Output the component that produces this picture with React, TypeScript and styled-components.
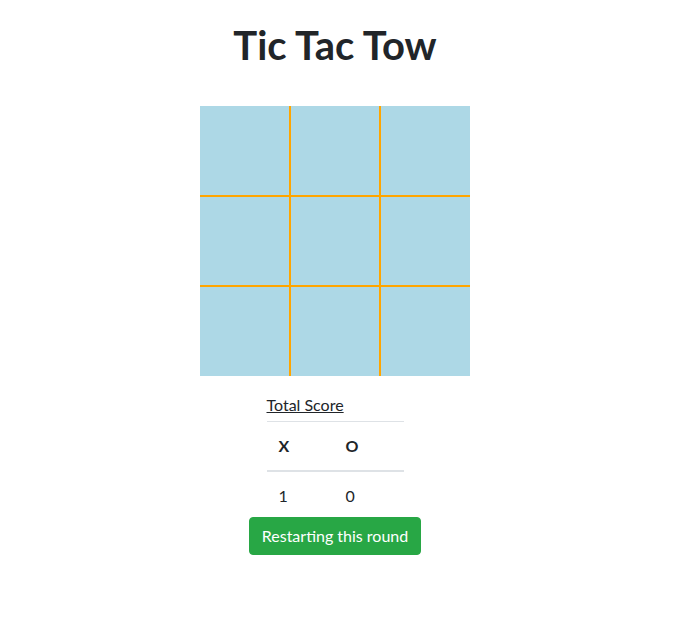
import React from "react";
import styled, { createGlobalStyle } from "styled-components";

const GlobalStyle = createGlobalStyle`
    body {
        margin: 0;
        font-family: Lato, "Open Sans", sans-serif;
        color: #212529;
        background: #fff;
    }
`;

const Page = styled.main`
    width: 670px;
    display: flex;
    flex-direction: column;
    align-items: center;
    padding-top: 21px;
`;

const Title = styled.h1`
    margin: 0 0 37px;
    font-size: 40px;
    line-height: 48px;
    font-weight: 700;
`;

const Board = styled.div`
    display: grid;
    grid-template-columns: repeat(3, 90px);
    grid-template-rows: repeat(3, 90px);
    background: lightblue;
`;

const Cell = styled.div<{ $col: number; $row: number }>`
    box-sizing: border-box;
    border-color: orange;
    border-style: solid;
    border-width: ${p => (p.$row > 0 ? 1 : 0)}px ${p => (p.$col < 2 ? 1 : 0)}px
        ${p => (p.$row < 2 ? 1 : 0)}px ${p => (p.$col > 0 ? 1 : 0)}px;
`;

const ScoreTable = styled.table`
    border-collapse: collapse;
    margin-top: 15px;
    font-size: 16px;
    line-height: 24px;

    caption {
        caption-side: top;
        text-align: left;
        text-decoration: underline;
        padding: 2px 0 4px;
    }

    th, td {
        padding: 12px;
        text-align: left;
    }

    th {
        border-top: 1px solid #dee2e6;
        border-bottom: 2px solid #dee2e6;
        font-weight: 700;
    }
`;

const ColX = styled.th`
    width: 43px;
`;

const ColO = styled.th`
    width: 46px;
`;

const RestartButton = styled.button`
    margin-top: -3px;
    padding: 6px 12px;
    border: 1px solid #28a745;
    border-radius: 4px;
    background: #28a745;
    color: #fff;
    font-family: inherit;
    font-size: 16px;
    line-height: 24px;
    cursor: pointer;
`;

const App = () => {
    const cells = Array.from({ length: 9 }, (_, i) => i);
    return (
        <>
            <GlobalStyle />
            <Page>
                <Title>Tic Tac Tow</Title>
                <Board>
                    {cells.map(i => <Cell key={i} $row={Math.floor(i / 3)} $col={i % 3} />)}
                </Board>
                <ScoreTable>
                    <caption>Total Score</caption>
                    <thead>
                        <tr><ColX>X</ColX><ColO>O</ColO></tr>
                    </thead>
                    <tbody>
                        <tr><td>1</td><td>0</td></tr>
                    </tbody>
                </ScoreTable>
                <RestartButton>Restarting this round</RestartButton>
            </Page>
        </>
    );
};

export default App;
